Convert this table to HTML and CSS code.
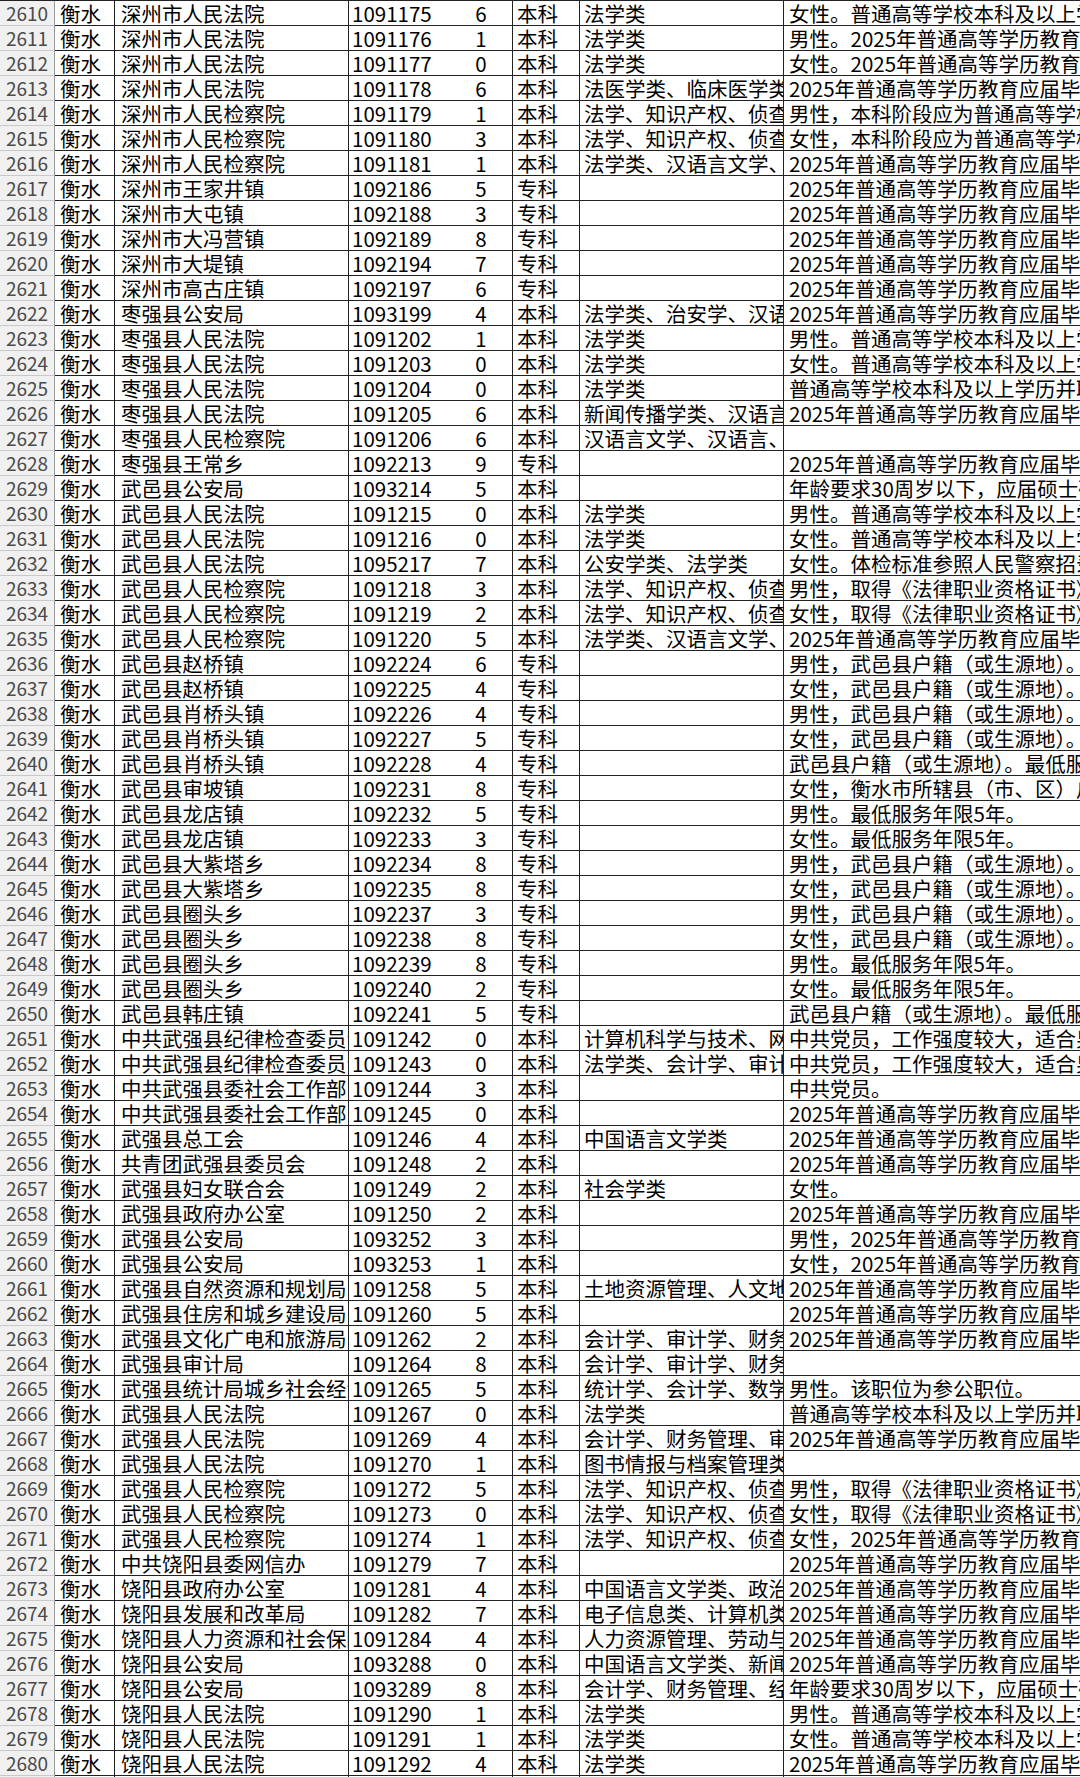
FILE: index.html
```html
<!DOCTYPE html>
<html lang="zh-CN">
<head>
<meta charset="utf-8">
<title>职位表</title>
<link rel="stylesheet" href="styles.css">
</head>
<body>
<div class="sheet">
<div class="row"><div class="cell no">2610</div><div class="cell city">衡水</div><div class="cell dept">深州市人民法院</div><div class="cell code">1091175</div><div class="cell num">6</div><div class="cell edu">本科</div><div class="cell major">法学类</div><div class="cell note">女性。普通高等学校本科及以上学历并取得相应学位。</div></div>
<div class="row"><div class="cell no">2611</div><div class="cell city">衡水</div><div class="cell dept">深州市人民法院</div><div class="cell code">1091176</div><div class="cell num">1</div><div class="cell edu">本科</div><div class="cell major">法学类</div><div class="cell note">男性。2025年普通高等学历教育应届毕业生。</div></div>
<div class="row"><div class="cell no">2612</div><div class="cell city">衡水</div><div class="cell dept">深州市人民法院</div><div class="cell code">1091177</div><div class="cell num">0</div><div class="cell edu">本科</div><div class="cell major">法学类</div><div class="cell note">女性。2025年普通高等学历教育应届毕业生。</div></div>
<div class="row"><div class="cell no">2613</div><div class="cell city">衡水</div><div class="cell dept">深州市人民法院</div><div class="cell code">1091178</div><div class="cell num">6</div><div class="cell edu">本科</div><div class="cell major">法医学类、临床医学类</div><div class="cell note">2025年普通高等学历教育应届毕业生。</div></div>
<div class="row"><div class="cell no">2614</div><div class="cell city">衡水</div><div class="cell dept">深州市人民检察院</div><div class="cell code">1091179</div><div class="cell num">1</div><div class="cell edu">本科</div><div class="cell major">法学、知识产权、侦查学</div><div class="cell note">男性，本科阶段应为普通高等学校全日制学历。</div></div>
<div class="row"><div class="cell no">2615</div><div class="cell city">衡水</div><div class="cell dept">深州市人民检察院</div><div class="cell code">1091180</div><div class="cell num">3</div><div class="cell edu">本科</div><div class="cell major">法学、知识产权、侦查学</div><div class="cell note">女性，本科阶段应为普通高等学校全日制学历。</div></div>
<div class="row"><div class="cell no">2616</div><div class="cell city">衡水</div><div class="cell dept">深州市人民检察院</div><div class="cell code">1091181</div><div class="cell num">1</div><div class="cell edu">本科</div><div class="cell major">法学类、汉语言文学、新闻学</div><div class="cell note">2025年普通高等学历教育应届毕业生。</div></div>
<div class="row"><div class="cell no">2617</div><div class="cell city">衡水</div><div class="cell dept">深州市王家井镇</div><div class="cell code">1092186</div><div class="cell num">5</div><div class="cell edu">专科</div><div class="cell major"></div><div class="cell note">2025年普通高等学历教育应届毕业生。</div></div>
<div class="row"><div class="cell no">2618</div><div class="cell city">衡水</div><div class="cell dept">深州市大屯镇</div><div class="cell code">1092188</div><div class="cell num">3</div><div class="cell edu">专科</div><div class="cell major"></div><div class="cell note">2025年普通高等学历教育应届毕业生。</div></div>
<div class="row"><div class="cell no">2619</div><div class="cell city">衡水</div><div class="cell dept">深州市大冯营镇</div><div class="cell code">1092189</div><div class="cell num">8</div><div class="cell edu">专科</div><div class="cell major"></div><div class="cell note">2025年普通高等学历教育应届毕业生。</div></div>
<div class="row"><div class="cell no">2620</div><div class="cell city">衡水</div><div class="cell dept">深州市大堤镇</div><div class="cell code">1092194</div><div class="cell num">7</div><div class="cell edu">专科</div><div class="cell major"></div><div class="cell note">2025年普通高等学历教育应届毕业生。</div></div>
<div class="row"><div class="cell no">2621</div><div class="cell city">衡水</div><div class="cell dept">深州市高古庄镇</div><div class="cell code">1092197</div><div class="cell num">6</div><div class="cell edu">专科</div><div class="cell major"></div><div class="cell note">2025年普通高等学历教育应届毕业生。</div></div>
<div class="row"><div class="cell no">2622</div><div class="cell city">衡水</div><div class="cell dept">枣强县公安局</div><div class="cell code">1093199</div><div class="cell num">4</div><div class="cell edu">本科</div><div class="cell major">法学类、治安学、汉语言文学</div><div class="cell note">2025年普通高等学历教育应届毕业生。</div></div>
<div class="row"><div class="cell no">2623</div><div class="cell city">衡水</div><div class="cell dept">枣强县人民法院</div><div class="cell code">1091202</div><div class="cell num">1</div><div class="cell edu">本科</div><div class="cell major">法学类</div><div class="cell note">男性。普通高等学校本科及以上学历并取得相应学位。</div></div>
<div class="row"><div class="cell no">2624</div><div class="cell city">衡水</div><div class="cell dept">枣强县人民法院</div><div class="cell code">1091203</div><div class="cell num">0</div><div class="cell edu">本科</div><div class="cell major">法学类</div><div class="cell note">女性。普通高等学校本科及以上学历并取得相应学位。</div></div>
<div class="row"><div class="cell no">2625</div><div class="cell city">衡水</div><div class="cell dept">枣强县人民法院</div><div class="cell code">1091204</div><div class="cell num">0</div><div class="cell edu">本科</div><div class="cell major">法学类</div><div class="cell note">普通高等学校本科及以上学历并取得法律职业资格证书。</div></div>
<div class="row"><div class="cell no">2626</div><div class="cell city">衡水</div><div class="cell dept">枣强县人民法院</div><div class="cell code">1091205</div><div class="cell num">6</div><div class="cell edu">本科</div><div class="cell major">新闻传播学类、汉语言文学</div><div class="cell note">2025年普通高等学历教育应届毕业生。</div></div>
<div class="row"><div class="cell no">2627</div><div class="cell city">衡水</div><div class="cell dept">枣强县人民检察院</div><div class="cell code">1091206</div><div class="cell num">6</div><div class="cell edu">本科</div><div class="cell major">汉语言文学、汉语言、秘书学</div><div class="cell note"></div></div>
<div class="row"><div class="cell no">2628</div><div class="cell city">衡水</div><div class="cell dept">枣强县王常乡</div><div class="cell code">1092213</div><div class="cell num">9</div><div class="cell edu">专科</div><div class="cell major"></div><div class="cell note">2025年普通高等学历教育应届毕业生。</div></div>
<div class="row"><div class="cell no">2629</div><div class="cell city">衡水</div><div class="cell dept">武邑县公安局</div><div class="cell code">1093214</div><div class="cell num">5</div><div class="cell edu">本科</div><div class="cell major"></div><div class="cell note">年龄要求30周岁以下，应届硕士研究生35周岁以下。</div></div>
<div class="row"><div class="cell no">2630</div><div class="cell city">衡水</div><div class="cell dept">武邑县人民法院</div><div class="cell code">1091215</div><div class="cell num">0</div><div class="cell edu">本科</div><div class="cell major">法学类</div><div class="cell note">男性。普通高等学校本科及以上学历并取得相应学位。</div></div>
<div class="row"><div class="cell no">2631</div><div class="cell city">衡水</div><div class="cell dept">武邑县人民法院</div><div class="cell code">1091216</div><div class="cell num">0</div><div class="cell edu">本科</div><div class="cell major">法学类</div><div class="cell note">女性。普通高等学校本科及以上学历并取得相应学位。</div></div>
<div class="row"><div class="cell no">2632</div><div class="cell city">衡水</div><div class="cell dept">武邑县人民法院</div><div class="cell code">1095217</div><div class="cell num">7</div><div class="cell edu">本科</div><div class="cell major">公安学类、法学类</div><div class="cell note">女性。体检标准参照人民警察招录体检标准执行。</div></div>
<div class="row"><div class="cell no">2633</div><div class="cell city">衡水</div><div class="cell dept">武邑县人民检察院</div><div class="cell code">1091218</div><div class="cell num">3</div><div class="cell edu">本科</div><div class="cell major">法学、知识产权、侦查学</div><div class="cell note">男性，取得《法律职业资格证书》A证。</div></div>
<div class="row"><div class="cell no">2634</div><div class="cell city">衡水</div><div class="cell dept">武邑县人民检察院</div><div class="cell code">1091219</div><div class="cell num">2</div><div class="cell edu">本科</div><div class="cell major">法学、知识产权、侦查学</div><div class="cell note">女性，取得《法律职业资格证书》A证。</div></div>
<div class="row"><div class="cell no">2635</div><div class="cell city">衡水</div><div class="cell dept">武邑县人民检察院</div><div class="cell code">1091220</div><div class="cell num">5</div><div class="cell edu">本科</div><div class="cell major">法学类、汉语言文学、新闻学</div><div class="cell note">2025年普通高等学历教育应届毕业生。</div></div>
<div class="row"><div class="cell no">2636</div><div class="cell city">衡水</div><div class="cell dept">武邑县赵桥镇</div><div class="cell code">1092224</div><div class="cell num">6</div><div class="cell edu">专科</div><div class="cell major"></div><div class="cell note">男性，武邑县户籍（或生源地）。最低服务年限5年。</div></div>
<div class="row"><div class="cell no">2637</div><div class="cell city">衡水</div><div class="cell dept">武邑县赵桥镇</div><div class="cell code">1092225</div><div class="cell num">4</div><div class="cell edu">专科</div><div class="cell major"></div><div class="cell note">女性，武邑县户籍（或生源地）。最低服务年限5年。</div></div>
<div class="row"><div class="cell no">2638</div><div class="cell city">衡水</div><div class="cell dept">武邑县肖桥头镇</div><div class="cell code">1092226</div><div class="cell num">4</div><div class="cell edu">专科</div><div class="cell major"></div><div class="cell note">男性，武邑县户籍（或生源地）。最低服务年限5年。</div></div>
<div class="row"><div class="cell no">2639</div><div class="cell city">衡水</div><div class="cell dept">武邑县肖桥头镇</div><div class="cell code">1092227</div><div class="cell num">5</div><div class="cell edu">专科</div><div class="cell major"></div><div class="cell note">女性，武邑县户籍（或生源地）。最低服务年限5年。</div></div>
<div class="row"><div class="cell no">2640</div><div class="cell city">衡水</div><div class="cell dept">武邑县肖桥头镇</div><div class="cell code">1092228</div><div class="cell num">4</div><div class="cell edu">专科</div><div class="cell major"></div><div class="cell note">武邑县户籍（或生源地）。最低服务年限5年。</div></div>
<div class="row"><div class="cell no">2641</div><div class="cell city">衡水</div><div class="cell dept">武邑县审坡镇</div><div class="cell code">1092231</div><div class="cell num">8</div><div class="cell edu">专科</div><div class="cell major"></div><div class="cell note">女性，衡水市所辖县（市、区）户籍（或生源地）。</div></div>
<div class="row"><div class="cell no">2642</div><div class="cell city">衡水</div><div class="cell dept">武邑县龙店镇</div><div class="cell code">1092232</div><div class="cell num">5</div><div class="cell edu">专科</div><div class="cell major"></div><div class="cell note">男性。最低服务年限5年。</div></div>
<div class="row"><div class="cell no">2643</div><div class="cell city">衡水</div><div class="cell dept">武邑县龙店镇</div><div class="cell code">1092233</div><div class="cell num">3</div><div class="cell edu">专科</div><div class="cell major"></div><div class="cell note">女性。最低服务年限5年。</div></div>
<div class="row"><div class="cell no">2644</div><div class="cell city">衡水</div><div class="cell dept">武邑县大紫塔乡</div><div class="cell code">1092234</div><div class="cell num">8</div><div class="cell edu">专科</div><div class="cell major"></div><div class="cell note">男性，武邑县户籍（或生源地）。最低服务年限5年。</div></div>
<div class="row"><div class="cell no">2645</div><div class="cell city">衡水</div><div class="cell dept">武邑县大紫塔乡</div><div class="cell code">1092235</div><div class="cell num">8</div><div class="cell edu">专科</div><div class="cell major"></div><div class="cell note">女性，武邑县户籍（或生源地）。最低服务年限5年。</div></div>
<div class="row"><div class="cell no">2646</div><div class="cell city">衡水</div><div class="cell dept">武邑县圈头乡</div><div class="cell code">1092237</div><div class="cell num">3</div><div class="cell edu">专科</div><div class="cell major"></div><div class="cell note">男性，武邑县户籍（或生源地）。最低服务年限5年。</div></div>
<div class="row"><div class="cell no">2647</div><div class="cell city">衡水</div><div class="cell dept">武邑县圈头乡</div><div class="cell code">1092238</div><div class="cell num">8</div><div class="cell edu">专科</div><div class="cell major"></div><div class="cell note">女性，武邑县户籍（或生源地）。最低服务年限5年。</div></div>
<div class="row"><div class="cell no">2648</div><div class="cell city">衡水</div><div class="cell dept">武邑县圈头乡</div><div class="cell code">1092239</div><div class="cell num">8</div><div class="cell edu">专科</div><div class="cell major"></div><div class="cell note">男性。最低服务年限5年。</div></div>
<div class="row"><div class="cell no">2649</div><div class="cell city">衡水</div><div class="cell dept">武邑县圈头乡</div><div class="cell code">1092240</div><div class="cell num">2</div><div class="cell edu">专科</div><div class="cell major"></div><div class="cell note">女性。最低服务年限5年。</div></div>
<div class="row"><div class="cell no">2650</div><div class="cell city">衡水</div><div class="cell dept">武邑县韩庄镇</div><div class="cell code">1092241</div><div class="cell num">5</div><div class="cell edu">专科</div><div class="cell major"></div><div class="cell note">武邑县户籍（或生源地）。最低服务年限5年。</div></div>
<div class="row"><div class="cell no">2651</div><div class="cell city">衡水</div><div class="cell dept">中共武强县纪律检查委员会</div><div class="cell code">1091242</div><div class="cell num">0</div><div class="cell edu">本科</div><div class="cell major">计算机科学与技术、网络工程</div><div class="cell note">中共党员，工作强度较大，适合男性。</div></div>
<div class="row"><div class="cell no">2652</div><div class="cell city">衡水</div><div class="cell dept">中共武强县纪律检查委员会</div><div class="cell code">1091243</div><div class="cell num">0</div><div class="cell edu">本科</div><div class="cell major">法学类、会计学、审计学</div><div class="cell note">中共党员，工作强度较大，适合男性。</div></div>
<div class="row"><div class="cell no">2653</div><div class="cell city">衡水</div><div class="cell dept">中共武强县委社会工作部</div><div class="cell code">1091244</div><div class="cell num">3</div><div class="cell edu">本科</div><div class="cell major"></div><div class="cell note">中共党员。</div></div>
<div class="row"><div class="cell no">2654</div><div class="cell city">衡水</div><div class="cell dept">中共武强县委社会工作部</div><div class="cell code">1091245</div><div class="cell num">0</div><div class="cell edu">本科</div><div class="cell major"></div><div class="cell note">2025年普通高等学历教育应届毕业生。</div></div>
<div class="row"><div class="cell no">2655</div><div class="cell city">衡水</div><div class="cell dept">武强县总工会</div><div class="cell code">1091246</div><div class="cell num">4</div><div class="cell edu">本科</div><div class="cell major">中国语言文学类</div><div class="cell note">2025年普通高等学历教育应届毕业生。</div></div>
<div class="row"><div class="cell no">2656</div><div class="cell city">衡水</div><div class="cell dept">共青团武强县委员会</div><div class="cell code">1091248</div><div class="cell num">2</div><div class="cell edu">本科</div><div class="cell major"></div><div class="cell note">2025年普通高等学历教育应届毕业生。</div></div>
<div class="row"><div class="cell no">2657</div><div class="cell city">衡水</div><div class="cell dept">武强县妇女联合会</div><div class="cell code">1091249</div><div class="cell num">2</div><div class="cell edu">本科</div><div class="cell major">社会学类</div><div class="cell note">女性。</div></div>
<div class="row"><div class="cell no">2658</div><div class="cell city">衡水</div><div class="cell dept">武强县政府办公室</div><div class="cell code">1091250</div><div class="cell num">2</div><div class="cell edu">本科</div><div class="cell major"></div><div class="cell note">2025年普通高等学历教育应届毕业生。</div></div>
<div class="row"><div class="cell no">2659</div><div class="cell city">衡水</div><div class="cell dept">武强县公安局</div><div class="cell code">1093252</div><div class="cell num">3</div><div class="cell edu">本科</div><div class="cell major"></div><div class="cell note">男性，2025年普通高等学历教育应届毕业生。</div></div>
<div class="row"><div class="cell no">2660</div><div class="cell city">衡水</div><div class="cell dept">武强县公安局</div><div class="cell code">1093253</div><div class="cell num">1</div><div class="cell edu">本科</div><div class="cell major"></div><div class="cell note">女性，2025年普通高等学历教育应届毕业生。</div></div>
<div class="row"><div class="cell no">2661</div><div class="cell city">衡水</div><div class="cell dept">武强县自然资源和规划局</div><div class="cell code">1091258</div><div class="cell num">5</div><div class="cell edu">本科</div><div class="cell major">土地资源管理、人文地理与城乡规划</div><div class="cell note">2025年普通高等学历教育应届毕业生。</div></div>
<div class="row"><div class="cell no">2662</div><div class="cell city">衡水</div><div class="cell dept">武强县住房和城乡建设局</div><div class="cell code">1091260</div><div class="cell num">5</div><div class="cell edu">本科</div><div class="cell major"></div><div class="cell note">2025年普通高等学历教育应届毕业生。</div></div>
<div class="row"><div class="cell no">2663</div><div class="cell city">衡水</div><div class="cell dept">武强县文化广电和旅游局</div><div class="cell code">1091262</div><div class="cell num">2</div><div class="cell edu">本科</div><div class="cell major">会计学、审计学、财务管理</div><div class="cell note">2025年普通高等学历教育应届毕业生。</div></div>
<div class="row"><div class="cell no">2664</div><div class="cell city">衡水</div><div class="cell dept">武强县审计局</div><div class="cell code">1091264</div><div class="cell num">8</div><div class="cell edu">本科</div><div class="cell major">会计学、审计学、财务管理</div><div class="cell note"></div></div>
<div class="row"><div class="cell no">2665</div><div class="cell city">衡水</div><div class="cell dept">武强县统计局城乡社会经济调查队</div><div class="cell code">1091265</div><div class="cell num">5</div><div class="cell edu">本科</div><div class="cell major">统计学、会计学、数学类</div><div class="cell note">男性。该职位为参公职位。</div></div>
<div class="row"><div class="cell no">2666</div><div class="cell city">衡水</div><div class="cell dept">武强县人民法院</div><div class="cell code">1091267</div><div class="cell num">0</div><div class="cell edu">本科</div><div class="cell major">法学类</div><div class="cell note">普通高等学校本科及以上学历并取得法律职业资格证书。</div></div>
<div class="row"><div class="cell no">2667</div><div class="cell city">衡水</div><div class="cell dept">武强县人民法院</div><div class="cell code">1091269</div><div class="cell num">4</div><div class="cell edu">本科</div><div class="cell major">会计学、财务管理、审计学</div><div class="cell note">2025年普通高等学历教育应届毕业生。</div></div>
<div class="row"><div class="cell no">2668</div><div class="cell city">衡水</div><div class="cell dept">武强县人民法院</div><div class="cell code">1091270</div><div class="cell num">1</div><div class="cell edu">本科</div><div class="cell major">图书情报与档案管理类</div><div class="cell note"></div></div>
<div class="row"><div class="cell no">2669</div><div class="cell city">衡水</div><div class="cell dept">武强县人民检察院</div><div class="cell code">1091272</div><div class="cell num">5</div><div class="cell edu">本科</div><div class="cell major">法学、知识产权、侦查学</div><div class="cell note">男性，取得《法律职业资格证书》A证。</div></div>
<div class="row"><div class="cell no">2670</div><div class="cell city">衡水</div><div class="cell dept">武强县人民检察院</div><div class="cell code">1091273</div><div class="cell num">0</div><div class="cell edu">本科</div><div class="cell major">法学、知识产权、侦查学</div><div class="cell note">女性，取得《法律职业资格证书》A证。</div></div>
<div class="row"><div class="cell no">2671</div><div class="cell city">衡水</div><div class="cell dept">武强县人民检察院</div><div class="cell code">1091274</div><div class="cell num">1</div><div class="cell edu">本科</div><div class="cell major">法学、知识产权、侦查学</div><div class="cell note">女性，2025年普通高等学历教育应届毕业生。</div></div>
<div class="row"><div class="cell no">2672</div><div class="cell city">衡水</div><div class="cell dept">中共饶阳县委网信办</div><div class="cell code">1091279</div><div class="cell num">7</div><div class="cell edu">本科</div><div class="cell major"></div><div class="cell note">2025年普通高等学历教育应届毕业生。</div></div>
<div class="row"><div class="cell no">2673</div><div class="cell city">衡水</div><div class="cell dept">饶阳县政府办公室</div><div class="cell code">1091281</div><div class="cell num">4</div><div class="cell edu">本科</div><div class="cell major">中国语言文学类、政治学类</div><div class="cell note">2025年普通高等学历教育应届毕业生。</div></div>
<div class="row"><div class="cell no">2674</div><div class="cell city">衡水</div><div class="cell dept">饶阳县发展和改革局</div><div class="cell code">1091282</div><div class="cell num">7</div><div class="cell edu">本科</div><div class="cell major">电子信息类、计算机类</div><div class="cell note">2025年普通高等学历教育应届毕业生。</div></div>
<div class="row"><div class="cell no">2675</div><div class="cell city">衡水</div><div class="cell dept">饶阳县人力资源和社会保障局</div><div class="cell code">1091284</div><div class="cell num">4</div><div class="cell edu">本科</div><div class="cell major">人力资源管理、劳动与社会保障</div><div class="cell note">2025年普通高等学历教育应届毕业生。</div></div>
<div class="row"><div class="cell no">2676</div><div class="cell city">衡水</div><div class="cell dept">饶阳县公安局</div><div class="cell code">1093288</div><div class="cell num">0</div><div class="cell edu">本科</div><div class="cell major">中国语言文学类、新闻传播学类</div><div class="cell note">2025年普通高等学历教育应届毕业生。</div></div>
<div class="row"><div class="cell no">2677</div><div class="cell city">衡水</div><div class="cell dept">饶阳县公安局</div><div class="cell code">1093289</div><div class="cell num">8</div><div class="cell edu">本科</div><div class="cell major">会计学、财务管理、经济学</div><div class="cell note">年龄要求30周岁以下，应届硕士研究生35周岁以下。</div></div>
<div class="row"><div class="cell no">2678</div><div class="cell city">衡水</div><div class="cell dept">饶阳县人民法院</div><div class="cell code">1091290</div><div class="cell num">1</div><div class="cell edu">本科</div><div class="cell major">法学类</div><div class="cell note">男性。普通高等学校本科及以上学历并取得相应学位。</div></div>
<div class="row"><div class="cell no">2679</div><div class="cell city">衡水</div><div class="cell dept">饶阳县人民法院</div><div class="cell code">1091291</div><div class="cell num">1</div><div class="cell edu">本科</div><div class="cell major">法学类</div><div class="cell note">女性。普通高等学校本科及以上学历并取得相应学位。</div></div>
<div class="row"><div class="cell no">2680</div><div class="cell city">衡水</div><div class="cell dept">饶阳县人民法院</div><div class="cell code">1091292</div><div class="cell num">4</div><div class="cell edu">本科</div><div class="cell major">法学类</div><div class="cell note">2025年普通高等学历教育应届毕业生。</div></div>
<div class="row"><div class="cell no">2681</div><div class="cell city">衡水</div><div class="cell dept">饶阳县人民检察院</div><div class="cell code">1091293</div><div class="cell num">2</div><div class="cell edu">本科</div><div class="cell major">法学类</div><div class="cell note">2025年普通高等学历教育应届毕业生。</div></div>
</div>
</body>
</html>
```

FILE: styles.css
```css
html, body {
  margin: 0;
  padding: 0;
  background: #ffffff;
  overflow: hidden;
}

body {
  width: 1080px;
  height: 1777px;
  font-family: "Noto Sans CJK SC", "Noto Sans", sans-serif;
  font-size: 20.5px;
  color: #000000;
}

.sheet {
  width: 1300px;
  border-top: 1px solid #222222;
}

.row {
  display: grid;
  grid-template-columns: 55px 60px 234px 101px 63px 67px 204px 516px;
  height: 25px;
}

.cell {
  box-sizing: border-box;
  height: 25px;
  border-right: 1px solid #222222;
  border-bottom: 1px solid #222222;
  overflow: hidden;
  white-space: nowrap;
  line-height: 24px;
  padding-left: 5px;
}

.no {
  background: #f0f0f0;
  color: #4a4a4a;
  font-size: 19px;
  text-align: center;
  padding-left: 0;
  border-right-color: #9a9a9a;
  border-bottom-color: #c8c8c8;
}

.dept {
  padding-left: 6px;
}

.code {
  border-right: none;
  padding-left: 3px;
}

.num {
  text-align: center;
  padding-left: 0;
}

.edu,
.major {
  padding-left: 4px;
}

.note {
  padding-left: 5px;
}
```
